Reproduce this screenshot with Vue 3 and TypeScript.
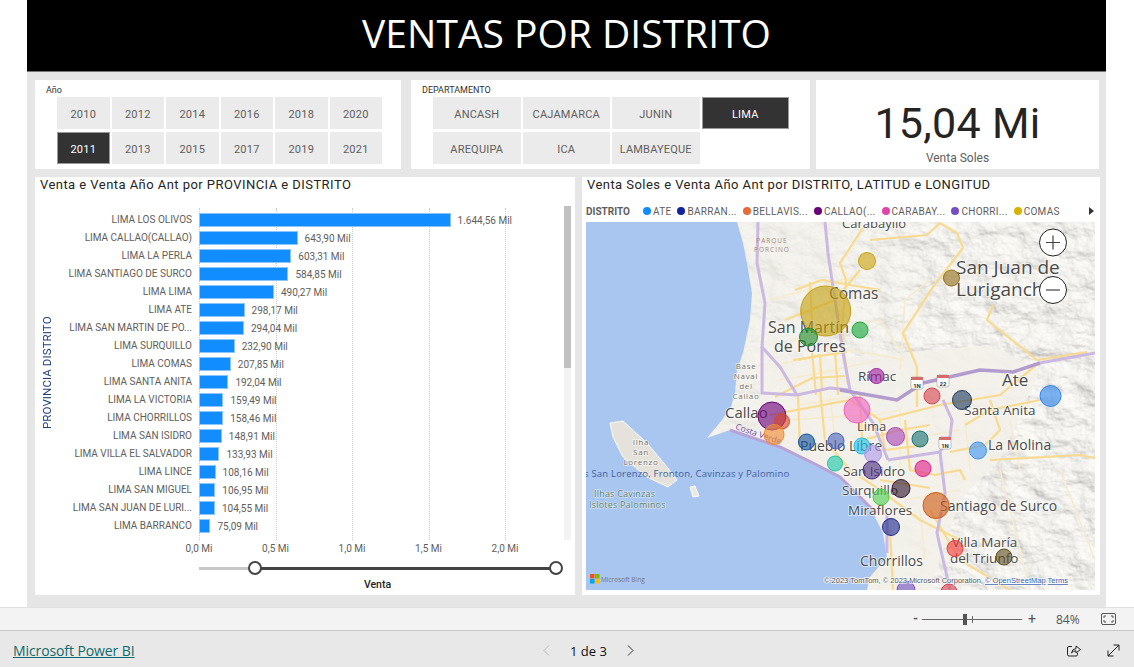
<script setup lang="ts">
interface Bar { name: string; label: string; value: number }
interface Bubble { x: number; y: number; r: number; color: string }
interface MapLabel { x: number; y: number; text: string; size: number }

const years = ['2010', '2011', '2012', '2013', '2014', '2015', '2016', '2017', '2018', '2019', '2020', '2021']
const departments = ['ANCASH', 'AREQUIPA', 'CAJAMARCA', 'ICA', 'JUNIN', 'LAMBAYEQUE', 'LIMA']

const bars: Bar[] = [
  { name: 'LIMA LOS OLIVOS', label: '1.644,56 Mil', value: 1644.56 },
  { name: 'LIMA CALLAO(CALLAO)', label: '643,90 Mil', value: 643.9 },
  { name: 'LIMA LA PERLA', label: '603,31 Mil', value: 603.31 },
  { name: 'LIMA SANTIAGO DE SURCO', label: '584,85 Mil', value: 584.85 },
  { name: 'LIMA LIMA', label: '490,27 Mil', value: 490.27 },
  { name: 'LIMA ATE', label: '298,17 Mil', value: 298.17 },
  { name: 'LIMA SAN MARTIN DE PO...', label: '294,04 Mil', value: 294.04 },
  { name: 'LIMA SURQUILLO', label: '232,90 Mil', value: 232.9 },
  { name: 'LIMA COMAS', label: '207,85 Mil', value: 207.85 },
  { name: 'LIMA SANTA ANITA', label: '192,04 Mil', value: 192.04 },
  { name: 'LIMA LA VICTORIA', label: '159,49 Mil', value: 159.49 },
  { name: 'LIMA CHORRILLOS', label: '158,46 Mil', value: 158.46 },
  { name: 'LIMA SAN ISIDRO', label: '148,91 Mil', value: 148.91 },
  { name: 'LIMA VILLA EL SALVADOR', label: '133,93 Mil', value: 133.93 },
  { name: 'LIMA LINCE', label: '108,16 Mil', value: 108.16 },
  { name: 'LIMA SAN MIGUEL', label: '106,95 Mil', value: 106.95 },
  { name: 'LIMA SAN JUAN DE LURI...', label: '104,55 Mil', value: 104.55 },
  { name: 'LIMA BARRANCO', label: '75,09 Mil', value: 75.09 },
]
const pxPerMil = 153 / 1000
const ticks = ['0,0 Mi', '0,5 Mi', '1,0 Mi', '1,5 Mi', '2,0 Mi']

const legend = [
  { name: 'ATE', color: '#118dff' },
  { name: 'BARRAN...', color: '#12239e' },
  { name: 'BELLAVIS...', color: '#e66c37' },
  { name: 'CALLAO(...', color: '#6b007b' },
  { name: 'CARABAY...', color: '#e044a7' },
  { name: 'CHORRI...', color: '#744ec2' },
  { name: 'COMAS', color: '#d9b300' },
]

const bubbles: Bubble[] = [
  { x: 825.7, y: 311, r: 25, color: '#c49f10' },
  { x: 808.5, y: 337, r: 9, color: '#1f8a2c' },
  { x: 860, y: 330, r: 8, color: '#1aab40' },
  { x: 867, y: 261, r: 8.5, color: '#c9a310' },
  { x: 951.5, y: 278, r: 8, color: '#94701c' },
  { x: 876.5, y: 376, r: 7.5, color: '#a01fa0' },
  { x: 932, y: 396, r: 8, color: '#d64550' },
  { x: 962, y: 400, r: 9.5, color: '#1f3a5f' },
  { x: 1050.5, y: 396, r: 10.5, color: '#2f86ee' },
  { x: 857, y: 410, r: 13, color: '#f062c0' },
  { x: 772, y: 416, r: 14, color: '#6b007b' },
  { x: 782, y: 421.5, r: 7.5, color: '#d64525' },
  { x: 774, y: 434.5, r: 10, color: '#f08a30' },
  { x: 806.5, y: 442, r: 8, color: '#12509e' },
  { x: 836, y: 441, r: 8, color: '#4a66c0' },
  { x: 835, y: 463.5, r: 7.5, color: '#1ac6a8' },
  { x: 862, y: 446, r: 8, color: '#20c0e8' },
  { x: 873, y: 454, r: 8.5, color: '#b09ae8' },
  { x: 895.5, y: 436.5, r: 9, color: '#a848b8' },
  { x: 920, y: 439, r: 8, color: '#197278' },
  { x: 978, y: 450.5, r: 8.5, color: '#3f94f0' },
  { x: 872, y: 470, r: 9, color: '#4a2f80' },
  { x: 923, y: 468.5, r: 8, color: '#e01e8c' },
  { x: 901, y: 488.5, r: 9, color: '#30162f' },
  { x: 881, y: 497, r: 8, color: '#4fd050' },
  { x: 936, y: 505.5, r: 13, color: '#cf5a14' },
  { x: 891, y: 527, r: 8.5, color: '#1f2a8f' },
  { x: 955, y: 548.5, r: 8, color: '#f03a3a' },
  { x: 1004, y: 557, r: 8, color: '#5f4f20' },
  { x: 906, y: 590, r: 9, color: '#744ec2' },
  { x: 949, y: 592, r: 8, color: '#d64550' },
]

const cityLabels: MapLabel[] = [
  { x: 842, y: 228, text: 'Carabayllo', size: 13 },
  { x: 829, y: 299, text: 'Comas', size: 15.5 },
  { x: 768, y: 333, text: 'San Martín', size: 16 },
  { x: 774, y: 352, text: 'de Porres', size: 16 },
  { x: 956, y: 274, text: 'San Juan de', size: 19 },
  { x: 956, y: 296, text: 'Lurigancho', size: 19 },
  { x: 858, y: 381, text: 'Rímac', size: 13.5 },
  { x: 1002, y: 386, text: 'Ate', size: 17 },
  { x: 964, y: 415, text: 'Santa Anita', size: 13.5 },
  { x: 988, y: 450, text: 'La Molina', size: 14 },
  { x: 725, y: 418, text: 'Callao', size: 15 },
  { x: 857, y: 431, text: 'Lima', size: 13 },
  { x: 800, y: 451, text: 'Pueblo Libre', size: 14 },
  { x: 843, y: 476, text: 'San Isidro', size: 13.5 },
  { x: 842, y: 495, text: 'Surquillo', size: 13.5 },
  { x: 848, y: 515, text: 'Miraflores', size: 13.5 },
  { x: 940, y: 511, text: 'Santiago de Surco', size: 14 },
  { x: 952, y: 547, text: 'Villa María', size: 13.5 },
  { x: 950, y: 563, text: 'del Triunfo', size: 13.5 },
  { x: 860, y: 566, text: 'Chorrillos', size: 14 },
]

const tinyLabels: MapLabel[] = [
  { x: 746, y: 369, text: 'Base', size: 8 },
  { x: 746, y: 379, text: 'Naval', size: 8 },
  { x: 746, y: 389, text: 'del', size: 8 },
  { x: 746, y: 399, text: 'Callao', size: 8 },
  { x: 641, y: 445, text: 'Ilha', size: 8 },
  { x: 641, y: 455, text: 'San', size: 8 },
  { x: 641, y: 465, text: 'Lorenzo', size: 8 },
]

const shields = [
  { x: 917, y: 383, text: '1N' },
  { x: 943, y: 381, text: '22' },
  { x: 945, y: 443, text: '1N' },
]

const coast =
  'M586 222 L737 222 L743 243 L747 263 L752 293 L750 320 L743 353 L737 370 L735 393 L731 407 L722 420 L707 438 L730 430 L780 447 L813 463 L840 477 L857 493 L873 513 L883 533 L887 557 L870 577 L867 590 L586 590 Z'

const highways = [
  'M825 222 L828 253 L832 280 L837 313 L843 353 L850 390 L873 423 L888 460',
  'M943 400 L952 420 L950 437 L940 452 L945 493 L937 533 L950 590',
  'M940 452 L888 460',
  'M758 222 L757 263 L765 303 L762 347 L780 367 L797 395',
  'M762 347 L762 393 L797 395 L830 388 L850 390',
  'M887 513 L887 553',
]
const mainHighway = 'M840 390 L897 400 L923 383 L980 370 L1013 372 L1040 363'
const paleHighway = 'M1040 363 L1095 353'

const roads = [
  'M870 240 L927 235 L940 223 L957 233 L963 248 L933 287 L903 333 L917 367 L917 407',
  'M993 305 L987 320 L1037 360',
  'M1037 360 L1087 352',
  'M863 228 L840 263 L846 280 L842 330 L848 385',
  'M795 290 L822 280 L850 285 L880 290',
  'M785 320 L835 300 L860 270',
  'M810 282 L812 320',
  'M798 360 L820 355 L822 390',
  'M798 395 L800 450',
  'M770 415 L850 400 L880 420 L940 405 L1000 395 L1040 362',
  'M820 390 L825 440 L850 470 L880 490 L920 520 L960 540',
  'M905 420 L910 470 L935 475 L960 470 L965 480',
  'M880 480 L930 488',
  'M890 530 L893 590',
  'M930 510 L960 560 L1010 590',
  'M990 460 L1080 455 L1095 458',
  'M990 400 L1000 430 L985 445 L950 452',
  'M1040 400 L990 410 L965 425',
  'M775 397 L812 378 L845 376',
  'M793 360 L847 352',
  'M812 352 L816 395',
  'M835 350 L838 395',
  'M860 395 L862 440 L900 430 L930 425',
  'M880 420 L885 450 L925 445',
]
const streets = [
  'M770 300 L825 285 L860 275',
  'M775 365 L850 350 L905 360',
  'M790 340 L880 320 L900 350',
  'M810 375 L880 360',
  'M1000 470 L1030 590',
  'M1060 470 L1095 560',
  'M900 370 L905 300 L930 280',
  'M780 380 L840 370',
  'M850 420 L900 410 L900 470',
  'M870 540 L880 590',
  'M1010 420 L1020 470',
  'M800 405 L860 395',
  'M790 420 L860 415',
  'M830 395 L835 440',
  'M900 440 L960 430',
  'M905 500 L960 490',
  'M920 510 L925 560',
  'M965 420 L970 470',
]
</script>

<template>
  <div class="page">
    <header class="banner">VENTAS POR DISTRITO</header>

    <main class="canvas">
      <section class="top-row">
        <div class="card slicer year-slicer">
          <div class="slicer-title">Año</div>
          <div class="chips year-chips">
            <div v-for="y in years" :key="y" class="chip" :class="{ active: y === '2011' }">{{ y }}</div>
          </div>
        </div>
        <div class="card slicer dept-slicer">
          <div class="slicer-title">DEPARTAMENTO</div>
          <div class="chips dept-chips">
            <div v-for="d in departments" :key="d" class="chip" :class="{ active: d === 'LIMA' }">{{ d }}</div>
          </div>
        </div>
        <div class="card kpi">
          <div class="kpi-value">15,04 Mi</div>
          <div class="kpi-label">Venta Soles</div>
        </div>
      </section>

      <section class="bottom-row">
        <div class="card bar-card">
          <div class="visual-title">Venta e Venta Año Ant por PROVINCIA e DISTRITO</div>
          <div class="bar-body">
            <div class="y-title">PROVINCIA DISTRITO</div>
            <div class="bar-area">
              <div class="gridlines">
                <i v-for="(t, i) in ticks" :key="t" class="gridline" :style="{ left: i * 76.5 + 'px' }"></i>
              </div>
              <div v-for="b in bars" :key="b.name" class="bar-row">
                <span class="bar-name">{{ b.name }}</span>
                <span class="bar-track">
                  <span class="bar" :style="{ width: b.value * pxPerMil + 'px' }"></span>
                  <span class="bar-value">{{ b.label }}</span>
                </span>
              </div>
            </div>
            <div class="scrollbar"><div class="scroll-thumb"></div></div>
          </div>
          <div class="x-axis">
            <span v-for="(t, i) in ticks" :key="t" class="tick" :style="{ left: i * 76.5 + 'px' }">{{ t }}</span>
          </div>
          <div class="range">
            <div class="range-off"></div>
            <div class="range-on"></div>
            <i class="handle handle-left"></i>
            <i class="handle handle-right"></i>
          </div>
          <div class="x-title">Venta</div>
        </div>

        <div class="card map-card">
          <div class="visual-title map-title">Venta Soles e Venta Año Ant por DISTRITO, LATITUD e LONGITUD</div>
          <div class="legend">
            <b class="legend-name">DISTRITO</b>
            <span v-for="l in legend" :key="l.name" class="legend-item">
              <i class="dot" :style="{ background: l.color }"></i>{{ l.name }}
            </span>
            <svg class="legend-more" width="5" height="8" viewBox="0 0 5 8"><path d="M0 0 L5 4 L0 8 Z" fill="#333" /></svg>
          </div>
          <svg class="map" width="509" height="368" viewBox="586 222 509 368">
            <defs>
              <filter id="relief" x="0" y="0" width="100%" height="100%">
                <feTurbulence type="fractalNoise" baseFrequency="0.03 0.045" numOctaves="5" seed="7" result="n" />
                <feDiffuseLighting in="n" surfaceScale="4.5" diffuseConstant="1.12" lighting-color="#f0efeb">
                  <feDistantLight azimuth="315" elevation="65" />
                </feDiffuseLighting>
              </filter>
              <linearGradient id="hillFade" x1="0" y1="0" x2="1" y2="0">
                <stop offset="0" stop-color="#fff" stop-opacity="0.1" />
                <stop offset="0.45" stop-color="#fff" stop-opacity="0.35" />
                <stop offset="0.7" stop-color="#fff" stop-opacity="0.9" />
                <stop offset="1" stop-color="#fff" stop-opacity="1" />
              </linearGradient>
              <mask id="hillMask">
                <rect x="586" y="222" width="509" height="368" fill="url(#hillFade)" />
                <path d="M760 365 L990 345 L1040 370 L1000 460 L960 500 L930 590 L760 590 Z" fill="#000" opacity="0.9" />
              </mask>
              <clipPath id="mapClip"><rect x="586" y="222" width="509" height="368" /></clipPath>
            </defs>
            <g clip-path="url(#mapClip)">
              <rect x="586" y="222" width="509" height="368" fill="#f3f1ea" />
              <rect x="586" y="222" width="509" height="368" filter="url(#relief)" mask="url(#hillMask)" />

              <path v-for="s in streets" :key="s" :d="s" class="street" />
              <path v-for="r in roads" :key="r" :d="r" class="road" />
              <path v-for="h in highways" :key="h" :d="h" class="highway" />
              <path :d="mainHighway" class="highway-main" />
              <path :d="paleHighway" class="highway" />

              <path :d="coast" fill="#a9c6f0" />
              <path d="M610 423 L623 421 L647 443 L667 467 L677 480 L668 487 L647 477 L623 457 L613 437 Z" fill="#e4e2da" stroke="#fff" stroke-width="1" />
              <path d="M690 487 L695 486 L699 496 L693 497 Z" fill="#ebe9e2" stroke="#fff" stroke-width="1" />
              <path d="M730 430 L780 447 L813 463 L840 477 L860 497 L876 513" class="shore" />

              <g v-for="s in shields" :key="s.x + '-' + s.y">
                <rect :x="s.x - 6" :y="s.y - 6" width="12" height="12" rx="2" fill="#fff" stroke="#888" stroke-width="0.5" />
                <rect :x="s.x - 6" :y="s.y - 6" width="12" height="3" fill="#d46a6a" />
                <text :x="s.x" :y="s.y + 4.5" class="shield-text">{{ s.text }}</text>
              </g>

              <text v-for="l in cityLabels" :key="l.text" :x="l.x" :y="l.y" :font-size="l.size" class="city">{{ l.text }}</text>
              <text v-for="l in tinyLabels" :key="l.text" :x="l.x" :y="l.y" :font-size="l.size" class="tiny">{{ l.text }}</text>
              <text x="772" y="243" class="park">PARQUE</text>
              <text x="772" y="252" class="park">PORCINO</text>
              <text x="735" y="429" transform="rotate(19 735 429)" class="costa">Costa Verde</text>
              <text x="584" y="477" class="sea">s San Lorenzo, Fronton, Cavinzas y Palomino</text>
              <text x="594" y="497" class="isle">Ilhas Cavinzas</text>
              <text x="589" y="508" class="isle">Islotes Palominos</text>

              <circle v-for="b in bubbles" :key="b.x + '-' + b.y" :cx="b.x" :cy="b.y" :r="b.r" :fill="b.color" :stroke="b.color" class="bubble" />

              <g class="zoom-btn">
                <circle cx="1053" cy="242.5" r="13.5" />
                <path d="M1046 242.5 H1060 M1053 235.5 V249.5" />
                <circle cx="1053" cy="290" r="13.5" />
                <path d="M1046 290 H1060" />
              </g>

              <rect x="590" y="574" width="4.5" height="4.5" fill="#f25022" />
              <rect x="595" y="574" width="4.5" height="4.5" fill="#7fba00" />
              <rect x="590" y="579" width="4.5" height="4.5" fill="#00a4ef" />
              <rect x="595" y="579" width="4.5" height="4.5" fill="#ffb900" />
              <text x="601" y="581.5" class="bing">Microsoft Bing</text>
              <text x="824" y="583" class="attrib">© 2023 TomTom, © 2023 Microsoft Corporation, <tspan class="attrib-link">© OpenStreetMap</tspan>  <tspan class="attrib-link">Terms</tspan></text>
            </g>
          </svg>
        </div>
      </section>
    </main>

    <div class="zoom-bar">
      <span class="zoom-minus">-</span>
      <div class="zoom-track">
        <i class="zoom-mark"></i>
        <i class="zoom-thumb"></i>
      </div>
      <span class="zoom-plus">+</span>
      <span class="zoom-pct">84%</span>
      <svg class="fit-icon" width="15" height="12" viewBox="0 0 15 12" fill="none" stroke="#555">
        <rect x="0.5" y="0.5" width="14" height="11" rx="1.5" />
        <path d="M3 5 V3 H5 M10 3 H12 V5 M12 7 V9 H10 M5 9 H3 V7" />
      </svg>
    </div>

    <footer class="footer">
      <a class="brand">Microsoft Power BI</a>
      <nav class="pager">
        <svg width="7" height="11" viewBox="0 0 7 11" fill="none" stroke="#bbb" stroke-width="1"><path d="M6 0.5 L1 5.5 L6 10.5" /></svg>
        <span class="page-text">1 de 3</span>
        <svg width="7" height="11" viewBox="0 0 7 11" fill="none" stroke="#333" stroke-width="1"><path d="M1 0.5 L6 5.5 L1 10.5" /></svg>
      </nav>
      <div class="footer-icons">
        <svg width="14" height="13" viewBox="0 0 14 13" fill="none" stroke="#222" stroke-width="1">
          <path d="M5 2.5 H2 Q0.5 2.5 0.5 4 V10.5 Q0.5 12 2 12 H9 Q10.5 12 10.5 10.5 V9" />
          <path d="M4.5 9 Q5 5 9 4.5 V2 L13.5 5.5 L9 9 V6.8 Q6 6.8 4.5 9 Z" />
        </svg>
        <svg width="13" height="13" viewBox="0 0 13 13" fill="none" stroke="#222" stroke-width="1">
          <path d="M1 12 L12 1 M6.5 1 H12 V6.5 M1 6.5 V12 H6.5" />
        </svg>
      </div>
    </footer>
  </div>
</template>

<style scoped>
.page {
  width: 1134px;
  height: 667px;
  display: flex;
  flex-direction: column;
  overflow: hidden;
  background: #fff;
  font-family: Roboto, "Liberation Sans", sans-serif;
}

.banner {
  margin: 0 28px 0 27px;
  height: 72px;
  flex: none;
  background: #000;
  border-bottom: 1px solid #777;
  box-sizing: border-box;
  color: #fff;
  font-family: "Open Sans", sans-serif;
  font-size: 39px;
  line-height: 65px;
  text-align: center;
}

.canvas {
  margin: 0 28px 0 27px;
  height: 535px;
  flex: none;
  background: #e6e6e6;
  padding: 8px 6px 0 8px;
  box-sizing: border-box;
  display: flex;
  flex-direction: column;
  gap: 8px;
}

.card {
  background: #fff;
  box-sizing: border-box;
}

.top-row {
  display: flex;
  height: 89px;
}

.slicer {
  position: relative;
  padding-top: 17px;
}

.year-slicer {
  width: 366px;
  padding-left: 22px;
}

.dept-slicer {
  width: 399px;
  margin-left: 10px;
  padding-left: 22px;
}

.slicer-title {
  position: absolute;
  top: 5px;
  left: 11px;
  font-size: 9px;
  line-height: 11px;
  color: #333;
}

.chips {
  display: grid;
  grid-auto-flow: column;
  grid-template-rows: 32px 32px;
  row-gap: 3px;
  column-gap: 2px;
}

.year-chips {
  width: 325px;
  grid-template-columns: repeat(6, 1fr);
}

.dept-chips {
  grid-template-columns: repeat(4, 87.5px);
}

.chip {
  display: flex;
  align-items: center;
  justify-content: center;
  padding-top: 2px;
  box-sizing: border-box;
  background: #ebebeb;
  color: #605e5c;
  font-size: 11px;
  letter-spacing: 0.2px;
}

.chip.active {
  background: #333;
  color: #fff;
  border: 1px solid #999;
}

.kpi {
  width: 283px;
  margin-left: 6px;
  display: flex;
  flex-direction: column;
  align-items: center;
}

.kpi-value {
  margin-top: 15px;
  font-size: 43px;
  line-height: 56px;
  letter-spacing: 0.3px;
  color: #252423;
}

.kpi-label {
  font-size: 12px;
  line-height: 15px;
  color: #605e5c;
}

.bottom-row {
  display: flex;
  height: 418px;
}

.bar-card {
  width: 540px;
}

.visual-title {
  height: 29px;
  padding: 0 0 0 5px;
  box-sizing: border-box;
  font-size: 13px;
  line-height: 15px;
  letter-spacing: 0.45px;
  color: #252423;
}

.bar-body {
  display: flex;
  height: 334px;
}

.y-title {
  flex: none;
  width: 22px;
  writing-mode: vertical-rl;
  transform: rotate(180deg);
  text-align: center;
  font-size: 11.5px;
  letter-spacing: 0.1px;
  line-height: 24px;
  color: #1f3f77;
}

.bar-area {
  position: relative;
  flex: none;
  width: 507px;
  padding-top: 4.5px;
  box-sizing: border-box;
}

.gridlines {
  position: absolute;
  top: 2px;
  bottom: 0;
  left: 142px;
  right: 0;
}

.gridline {
  position: absolute;
  top: 0;
  bottom: 0;
  border-left: 1px dotted #ccc;
}

.bar-row {
  position: relative;
  display: grid;
  grid-template-columns: 135px 1fr;
  column-gap: 7px;
  height: 18px;
  align-items: center;
}

.bar-name {
  text-align: right;
  white-space: nowrap;
  font-size: 10px;
  line-height: 12px;
  color: #605e5c;
}

.bar-track {
  display: flex;
  align-items: center;
}

.bar {
  height: 14px;
  background: #118dff;
  box-sizing: border-box;
  border: 1px solid #8cc6fb;
}

.bar-value {
  margin: 1px 0 0 7px;
  white-space: nowrap;
  font-size: 10px;
  color: #605e5c;
}

.scrollbar {
  flex: none;
  width: 7px;
  background: #f3f3f3;
}

.scroll-thumb {
  height: 162px;
  background: #c1c1c1;
}

.x-axis {
  position: relative;
  height: 17px;
  margin: 0 0 0 164px;
}

.tick {
  position: absolute;
  top: 3px;
  transform: translateX(-50%);
  font-size: 10px;
  line-height: 12px;
  color: #605e5c;
  white-space: nowrap;
}

.range {
  position: relative;
  display: flex;
  align-items: center;
  width: 357px;
  height: 14px;
  margin: 4px 0 0 164px;
}

.range-off {
  width: 56px;
  height: 3px;
  background: #c8c8c8;
}

.range-on {
  flex: 1;
  height: 3px;
  background: #444;
}

.handle {
  position: absolute;
  top: 0;
  width: 14px;
  height: 14px;
  box-sizing: border-box;
  border: 2px solid #444;
  border-radius: 50%;
  background: #fff;
}

.handle-left {
  left: 49px;
}

.handle-right {
  right: -7px;
}

.x-title {
  width: 357px;
  margin: 3px 0 0 164px;
  text-align: center;
  font-size: 10.5px;
  line-height: 13px;
  font-weight: 500;
  color: #252423;
}

.map-card {
  width: 518px;
  margin-left: 7px;
  padding-left: 4px;
}

.map-title {
  height: 26px;
  padding: 0 0 0 1px;
}

.legend {
  display: flex;
  align-items: center;
  height: 19px;
  padding-bottom: 3px;
  box-sizing: border-box;
  width: 509px;
  color: #605e5c;
  font-size: 10px;
  letter-spacing: 0.3px;
  white-space: nowrap;
}

.legend-name {
  width: 57px;
  letter-spacing: 0;
  font-weight: 700;
}

.legend-item {
  display: flex;
  align-items: center;
  gap: 2px;
  margin-right: 6px;
}

.dot {
  width: 8px;
  height: 8px;
  border-radius: 50%;
}

.legend-more {
  margin-left: auto;
  margin-right: 1px;
}

.map {
  display: block;
}

.street {
  fill: none;
  stroke: #f6ebcd;
  stroke-width: 1.5;
}

.road {
  fill: none;
  stroke: #f9da8f;
  stroke-width: 2.2;
}

.highway {
  fill: none;
  stroke: #cbb9e2;
  stroke-width: 3;
}

.highway-main {
  fill: none;
  stroke: #b19ccd;
  stroke-width: 3.5;
}

.shore {
  fill: none;
  stroke: #b8a2d8;
  stroke-width: 3;
}

.shield-text {
  font-size: 6px;
  font-weight: 700;
  text-anchor: middle;
  fill: #333;
}

.city {
  font-family: "Open Sans", sans-serif;
  fill: #4a4a4a;
  stroke: rgba(255, 255, 255, 0.6);
  stroke-width: 2px;
  paint-order: stroke;
}

.tiny {
  font-family: "Open Sans", sans-serif;
  fill: #6f6e68;
  text-anchor: middle;
  letter-spacing: 0.7px;
  stroke: rgba(255, 255, 255, 0.7);
  stroke-width: 1.5px;
  paint-order: stroke;
}

.park {
  font-family: "Open Sans", sans-serif;
  font-size: 6.5px;
  letter-spacing: 1px;
  text-anchor: middle;
  fill: #a38a7c;
}

.costa {
  font-family: "Open Sans", sans-serif;
  font-size: 8.5px;
  fill: #6a4fae;
}

.sea {
  font-family: "Open Sans", sans-serif;
  font-size: 9.5px;
  letter-spacing: 0.2px;
  fill: #43609f;
}

.isle {
  font-family: "Open Sans", sans-serif;
  font-size: 9px;
  letter-spacing: 0.2px;
  fill: #5e8068;
  stroke: rgba(255, 255, 255, 0.45);
  stroke-width: 1.5px;
  paint-order: stroke;
}

.bubble {
  fill-opacity: 0.62;
  stroke-width: 1;
}

.zoom-btn circle {
  fill: #fff;
  stroke: #222;
  stroke-width: 1;
}

.zoom-btn path {
  fill: none;
  stroke: #444;
  stroke-width: 1.2;
}

.bing {
  font-family: "Open Sans", sans-serif;
  font-size: 6.5px;
  fill: #777;
}

.attrib {
  font-family: "Liberation Sans", sans-serif;
  font-size: 7.5px;
  fill: #555;
  stroke: rgba(255, 255, 255, 0.8);
  stroke-width: 1.5px;
  paint-order: stroke;
}

.attrib-link {
  fill: #3a5fb0;
  text-decoration: underline;
}

.zoom-bar {
  height: 24px;
  flex: none;
  background: #f3f3f3;
  box-sizing: border-box;
  border-top: 1px solid #e0e0e0;
  border-bottom: 1px solid #c8c8c8;
  display: flex;
  align-items: center;
  padding-left: 913px;
  color: #555;
}

.zoom-minus {
  width: 9px;
  font-size: 13px;
  font-weight: 700;
  line-height: 14px;
}

.zoom-track {
  position: relative;
  width: 100px;
  height: 1px;
  background: #666;
}

.zoom-mark {
  position: absolute;
  left: 50px;
  top: -3px;
  width: 1px;
  height: 7px;
  background: #666;
}

.zoom-thumb {
  position: absolute;
  left: 41px;
  top: -5px;
  width: 4px;
  height: 11px;
  background: #555;
}

.zoom-plus {
  margin-left: 6px;
  width: 28px;
  font-size: 14px;
  line-height: 14px;
}

.zoom-pct {
  width: 45px;
  font-family: "Open Sans", sans-serif;
  font-size: 12px;
}

.footer {
  flex: 1;
  background: #e8e8e8;
  display: grid;
  grid-template-columns: 530px auto 1fr;
  align-items: center;
  padding: 3px 14px 0 13px;
}

.brand {
  font-family: "Open Sans", sans-serif;
  font-size: 14px;
  letter-spacing: -0.1px;
  color: #0f6b6b;
  text-decoration: underline;
}

.pager {
  display: flex;
  align-items: center;
  gap: 20px;
}

.page-text {
  font-family: "Open Sans", sans-serif;
  font-size: 13px;
  color: #111;
}

.footer-icons {
  display: flex;
  justify-content: flex-end;
  gap: 26px;
}
</style>

<style>
html,
body {
  margin: 0;
  background: #fff;
}
</style>
